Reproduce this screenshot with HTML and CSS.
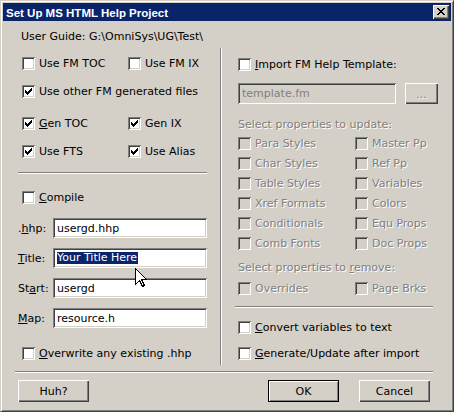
FILE: index.html
```html
<!DOCTYPE html>
<html>
<head>
<meta charset="utf-8">
<title>Set Up MS HTML Help Project</title>
<link rel="stylesheet" href="styles.css">
</head>
<body>
<div class="window">
  <div class="titlebar">
    <span class="title">Set Up MS HTML Help Project</span>
    <div class="close">
      <svg width="8" height="7" viewBox="0 0 8 7" shape-rendering="crispEdges"><path d="M0 0h2v1H0zM6 0h2v1H6zM1 1h2v1H1zM5 1h2v1H5zM2 2h4v1H2zM3 3h2v1H3zM2 4h4v1H2zM1 5h2v1H1zM5 5h2v1H5zM0 6h2v1H0zM6 6h2v1H6z" fill="#000"/></svg>
    </div>
  </div>

  <div class="client">
    <div class="guide">User Guide: G:\OmniSys\UG\Test\</div>

    <div class="columns">
      <div class="col left">
        <div class="pair first-pair">
          <div class="check"><span class="box"></span><span class="lbl">Use FM TOC</span></div>
          <div class="check"><span class="box"></span><span class="lbl">Use FM IX</span></div>
        </div>
        <div class="check indent other-files"><span class="box checked"></span><span class="lbl">Use other FM generated files</span></div>
        <div class="pair gen-pair">
          <div class="check"><span class="box checked"></span><span class="lbl"><u>G</u>en TOC</span></div>
          <div class="check"><span class="box checked"></span><span class="lbl">Gen IX</span></div>
        </div>
        <div class="pair use-pair">
          <div class="check"><span class="box checked"></span><span class="lbl">Use FTS</span></div>
          <div class="check"><span class="box checked"></span><span class="lbl">Use Alias</span></div>
        </div>
        <div class="hsep left-sep"></div>
        <div class="check indent compile"><span class="box"></span><span class="lbl"><u>C</u>ompile</span></div>
        <div class="fields">
          <div class="field-row"><span class="field-label">.<u>h</u>hp:</span><div class="edit">usergd.hhp</div></div>
          <div class="field-row"><span class="field-label"><u>T</u>itle:</span><div class="edit"><span class="selected">Your Title Here</span></div></div>
          <div class="field-row"><span class="field-label">St<u>a</u>rt:</span><div class="edit">usergd</div></div>
          <div class="field-row"><span class="field-label"><u>M</u>ap:</span><div class="edit">resource.h</div></div>
        </div>
        <div class="check indent overwrite"><span class="box"></span><span class="lbl"><u>O</u>verwrite any existing .hhp</span></div>
      </div>

      <div class="vsep"></div>

      <div class="col right">
        <div class="check indent import"><span class="box"></span><span class="lbl"><u>I</u>mport FM Help Template:</span></div>
        <div class="template-row indent">
          <div class="edit template disabled-text">template.fm</div>
          <div class="btn browse disabled-text">...</div>
        </div>
        <div class="caption indent disabled-text update-caption">Select properties to update:</div>
        <div class="props indent update-props">
          <div class="check disabled"><span class="box"></span><span class="lbl">Para Styles</span></div>
          <div class="check disabled"><span class="box"></span><span class="lbl">Master Pp</span></div>
          <div class="check disabled"><span class="box"></span><span class="lbl">Char Styles</span></div>
          <div class="check disabled"><span class="box"></span><span class="lbl">Ref Pp</span></div>
          <div class="check disabled"><span class="box"></span><span class="lbl">Table Styles</span></div>
          <div class="check disabled"><span class="box"></span><span class="lbl">Variables</span></div>
          <div class="check disabled"><span class="box"></span><span class="lbl">Xref Formats</span></div>
          <div class="check disabled"><span class="box"></span><span class="lbl">Colors</span></div>
          <div class="check disabled"><span class="box"></span><span class="lbl">Conditionals</span></div>
          <div class="check disabled"><span class="box"></span><span class="lbl">Equ Props</span></div>
          <div class="check disabled"><span class="box"></span><span class="lbl">Comb Fonts</span></div>
          <div class="check disabled"><span class="box"></span><span class="lbl">Doc Props</span></div>
        </div>
        <div class="caption indent disabled-text remove-caption">Select properties to <u>r</u>emove:</div>
        <div class="props indent remove-props">
          <div class="check disabled"><span class="box"></span><span class="lbl">Overrides</span></div>
          <div class="check disabled"><span class="box"></span><span class="lbl">Page Brks</span></div>
        </div>
        <div class="hsep right-sep"></div>
        <div class="check indent convert"><span class="box"></span><span class="lbl"><u>C</u>onvert variables to text</span></div>
        <div class="check indent generate"><span class="box"></span><span class="lbl"><u>G</u>enerate/Update after import</span></div>
      </div>
    </div>

    <div class="hsep bottom-sep"></div>

    <div class="buttons">
      <div class="btn">Huh?</div>
      <div class="btn default ok">OK</div>
      <div class="btn">Cancel</div>
    </div>
  </div>

  <svg class="cursor" width="13" height="21" viewBox="0 0 13 21" shape-rendering="crispEdges"><path d="M0.5 0.5V16.5L4.5 12.5L7.5 18.5L9.5 17.5L6.5 11.5H11.5Z" fill="#fff" stroke="#000" stroke-width="1" stroke-linejoin="miter"/></svg>
</div>
</body>
</html>
```

FILE: styles.css
```css
body {
  margin: 0;
  background: #d4d0c8;
}

.window {
  position: relative;
  width: 454px;
  height: 412px;
  box-sizing: border-box;
  background: #d4d0c8;
  border: 1px solid;
  border-color: #d4d0c8 #404040 #404040 #d4d0c8;
  box-shadow: inset 1px 1px #fff, inset -1px -1px #808080;
  padding: 2px;
  display: flex;
  flex-direction: column;
  font: 11px "DejaVu Sans", "Noto Sans", sans-serif;
  color: #000;
}

/* title bar */
.titlebar {
  height: 18px;
  flex: none;
  background: #0a246a;
  display: flex;
  align-items: flex-start;
  justify-content: space-between;
  padding: 0 2px 0 3px;
}

.title {
  color: #fff;
  font: bold 11.5px "Liberation Sans", Arial, sans-serif;
  line-height: 18px;
  margin-top: 1px;
  white-space: nowrap;
}

.close {
  width: 16px;
  height: 14px;
  margin-top: 2px;
  background: #d4d0c8;
  box-shadow: inset 1px 1px #fff, inset -1px -1px #404040, inset -2px -2px #808080;
  display: flex;
  align-items: center;
  justify-content: center;
}

.close svg {
  display: block;
  margin-top: -1px;
}

/* client area */
.client {
  flex: 1;
  display: flex;
  flex-direction: column;
}

.guide {
  margin: 9px 0 0 18px;
  line-height: 13px;
  height: 13px;
  white-space: nowrap;
}

.columns {
  display: flex;
  margin-top: 5px;
  height: 317px;
}

.col {
  box-sizing: border-box;
  display: flex;
  flex-direction: column;
  align-items: flex-start;
}

.col.left {
  width: 217px;
  padding-left: 15px;
}

.col.right {
  flex: 1;
  padding-left: 13px;
}

.left .indent,
.left .pair {
  margin-left: 4px;
}

.right .indent {
  margin-left: 3px;
}

.vsep {
  width: 2px;
  box-sizing: border-box;
  border-left: 1px solid #808080;
  border-right: 1px solid #fff;
}

.hsep {
  height: 2px;
  box-sizing: border-box;
  border-top: 1px solid #808080;
  border-bottom: 1px solid #fff;
}

/* checkboxes */
.check {
  display: flex;
  align-items: center;
  height: 13px;
  line-height: 13px;
  white-space: nowrap;
}

.box {
  position: relative;
  flex: none;
  width: 13px;
  height: 13px;
  margin-right: 4px;
  background: #fff;
  box-shadow: inset 1px 1px #808080, inset -1px -1px #fff, inset 2px 2px #404040, inset -2px -2px #d4d0c8;
}

.box.checked::after {
  content: "";
  position: absolute;
  left: 0;
  top: 0;
  width: 1px;
  height: 1px;
  box-shadow:
    9px 3px #000,
    8px 4px #000, 9px 4px #000,
    3px 5px #000, 7px 5px #000, 8px 5px #000, 9px 5px #000,
    3px 6px #000, 4px 6px #000, 6px 6px #000, 7px 6px #000, 8px 6px #000,
    3px 7px #000, 4px 7px #000, 5px 7px #000, 6px 7px #000, 7px 7px #000,
    4px 8px #000, 5px 8px #000, 6px 8px #000,
    5px 9px #000;
}

.check.disabled .box {
  background: #d4d0c8;
}

.disabled .lbl,
.disabled-text {
  color: #808080;
  text-shadow: 1px 1px #fff;
}

.pair {
  display: grid;
  grid-template-columns: 106px auto;
}

/* left column vertical rhythm */
.first-pair { margin-top: 9px; }
.other-files { margin-top: 15px; }
.gen-pair { margin-top: 19px; }
.use-pair { margin-top: 15px; }
.left-sep { margin-top: 14px; width: 189px; }
.compile { margin-top: 17px; }
.fields { margin-top: 14px; display: flex; flex-direction: column; gap: 10px; }
.overwrite { margin-top: 19px; }

/* edit fields */
.field-row {
  display: flex;
  align-items: center;
  height: 20px;
}

.field-label {
  width: 35px;
  line-height: 13px;
}

.edit {
  width: 154px;
  height: 20px;
  box-sizing: border-box;
  padding: 0 4px;
  background: #fff;
  box-shadow: inset 1px 1px #808080, inset -1px -1px #fff, inset 2px 2px #404040, inset -2px -2px #d4d0c8;
  display: flex;
  align-items: center;
  line-height: 13px;
  white-space: nowrap;
  overflow: hidden;
}

.selected {
  display: inline-block;
  background: #0a246a;
  color: #fff;
  line-height: 12px;
  height: 12px;
  padding-right: 1px;
}

/* right column */
.import { margin-top: 10px; }

.template-row {
  margin-top: 12px;
  display: flex;
  gap: 9px;
  height: 21px;
}

.edit.template {
  width: 158px;
  height: 21px;
  background: #d4d0c8;
  text-shadow: none;
}

.caption {
  line-height: 13px;
  height: 13px;
  white-space: nowrap;
}

.update-caption { margin-top: 14px; }
.remove-caption { margin-top: 11px; }

.props {
  display: grid;
  grid-template-columns: 117px auto;
  row-gap: 7px;
}

.update-props { margin-top: 6px; }
.remove-props { margin-top: 8px; }
.right-sep { margin-top: 11px; width: 198px; }
.convert { margin-top: 13px; }
.generate { margin-top: 13px; }

/* buttons */
.btn {
  width: 71px;
  height: 22px;
  box-sizing: border-box;
  background: #d4d0c8;
  box-shadow: inset 1px 1px #fff, inset -1px -1px #404040, inset -2px -2px #808080;
  display: flex;
  align-items: center;
  justify-content: center;
  line-height: 13px;
}

.btn.default {
  border: 1px solid #000;
  box-shadow: inset 1px 1px #fff, inset -1px -1px #808080;
}

.btn.browse {
  width: 33px;
  height: 21px;
  padding-top: 1px;
}

.bottom-sep {
  margin: 6px 0 0 12px;
  width: 418px;
}

.buttons {
  display: flex;
  margin-top: 7px;
  padding: 0 21px 0 15px;
}

.btn.ok {
  margin-left: auto;
  margin-right: 20px;
}

/* mouse pointer over the Title field */
.cursor {
  position: absolute;
  left: 134px;
  top: 267px;
}
```
